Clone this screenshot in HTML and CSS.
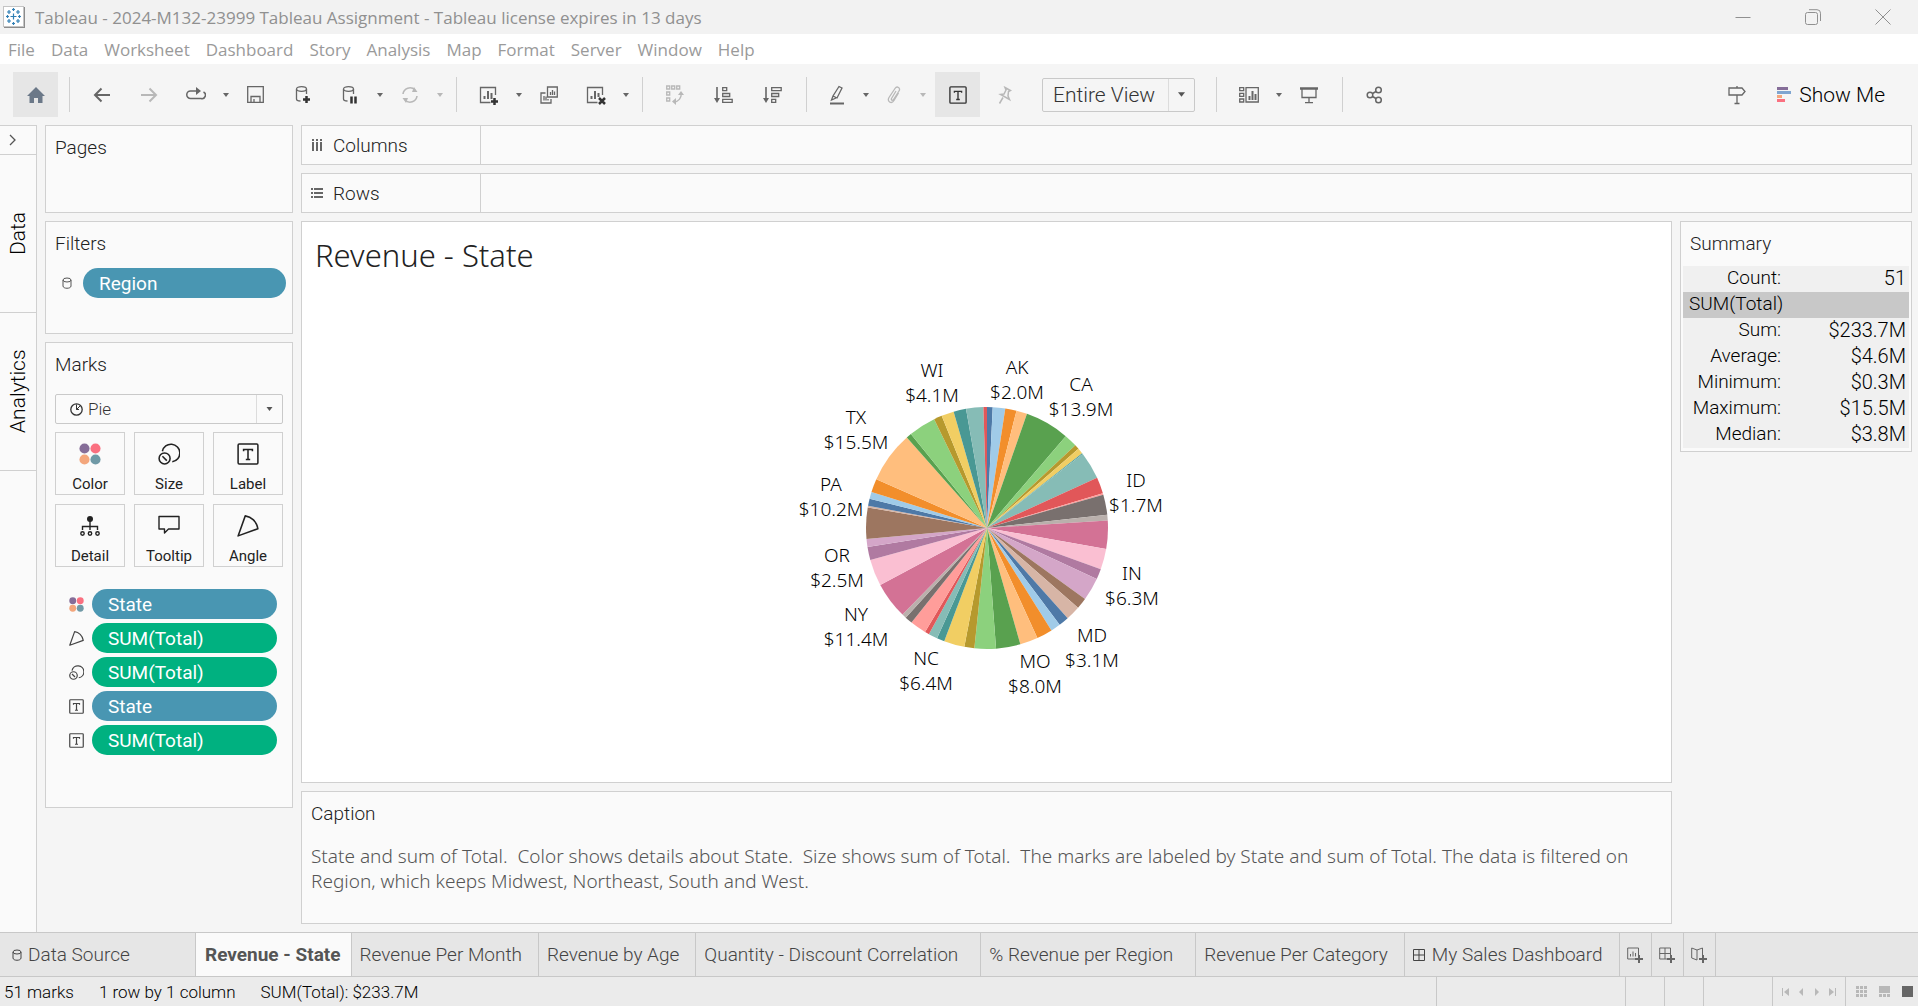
FILE: index.html
```html
<!DOCTYPE html>
<html lang="en">
<head>
<meta charset="utf-8">
<title>Tableau - 2024-M132-23999 Tableau Assignment</title>
<link rel="stylesheet" href="styles.css">
</head>
<body>
<svg class="sprite" aria-hidden="true">
  <symbol id="i-caret" viewBox="0 0 6 4"><path d="M0 0h6L3 4z" fill="currentColor" stroke="none"/></symbol>
  <symbol id="i-text" viewBox="0 0 20 20"><rect x="1" y="1" width="18" height="18" rx="1"/><path d="M6 7.500V6h8v1.500M10 6v9M8 15h4"/></symbol>
  <symbol id="i-angle" viewBox="0 0 20 20"><path d="M7.500.8 1 19 19 12.500C18 6 13 1.500 7.500.8z" stroke-linejoin="round"/></symbol>
  <symbol id="i-size" viewBox="0 0 20 20"><path d="M4 7.500a8 8 0 1 1 9 9.500"/><circle cx="6" cy="14" r="5"/><path d="M4 12l4 4"/></symbol>
  <symbol id="i-color" viewBox="0 0 20 20"><g stroke="none"><circle cx="5" cy="5" r="4.600" fill="#856d98"/><circle cx="15" cy="5" r="4.600" fill="#fa7080"/><circle cx="5" cy="15" r="4.600" fill="#f3a67c"/><circle cx="15" cy="15" r="4.600" fill="#7099a6"/></g></symbol>
  <symbol id="i-db" viewBox="0 0 10 12"><ellipse cx="5" cy="3" rx="4" ry="2"/><path d="M1 3v6c0 3 8 3 8 0V3"/></symbol>
  <symbol id="i-grid" viewBox="0 0 12 12"><path d="M.5.5h11v11H.5zM6 .5v11M.5 6h11"/></symbol>
</svg>

<header class="titlebar">
  <svg width="22" height="22" viewBox="0 0 22 22"><rect x=".5" y=".5" width="20" height="20" fill="#fff" stroke="#c4c4c4"/><path d="M1 21.500h21M21.500 1v21" stroke="#8c8c8c"/><g stroke="#2f7fb5" stroke-width="1.200"><path d="M10.500 7.500v6M7.500 10.500h6M10.500 2v3M9 3.500h3M10.500 16v3M9 17.500h3M4.500 9v3M3 10.500h3M16.500 9v3M15 10.500h3M6 4v4M4 6h4M15 4v4M13 6h4M6 13v4M4 15h4M15 13v4M13 15h4"/></g></svg>
  <h1 class="app-title">Tableau - 2024-M132-23999 Tableau Assignment - Tableau license expires in 13 days</h1>
  <div class="window-controls">
    <button aria-label="Minimize"><svg width="16" height="16" viewBox="0 0 16 16"><path d="M.5 8.500h15"/></svg></button>
    <button aria-label="Restore"><svg width="16" height="16" viewBox="0 0 16 16"><rect x=".5" y="3.500" width="12" height="12" rx="2"/><path d="M4 .7h8a3.500 3.500 0 0 1 3.500 3.500V12"/></svg></button>
    <button aria-label="Close"><svg width="16" height="16" viewBox="0 0 16 16"><path d="M.5.5l15 15M15.500.5l-15 15"/></svg></button>
  </div>
</header>

<nav class="menubar">
  <button>File</button><button>Data</button><button>Worksheet</button><button>Dashboard</button><button>Story</button><button>Analysis</button><button>Map</button><button>Format</button><button>Server</button><button>Window</button><button>Help</button>
</nav>

<div class="toolbar" role="toolbar">
  <button class="tool tool-on tool-home" aria-label="Start page"><svg class="solid" width="18" height="18" viewBox="0 0 18 18"><path d="M9 1 0 10h2.500v7h4.500v-5h4v5h4.500v-7H18z" fill="#6b7888"/></svg></button>
  <span class="sep"></span>
  <button class="tool" aria-label="Undo"><svg width="18" height="18" viewBox="0 0 18 18" stroke-width="2"><path d="M17 9H2M8.500 2.500 2 9l6.500 6.500"/></svg></button>
  <button class="tool off" aria-label="Redo"><svg width="18" height="18" viewBox="0 0 18 18" stroke-width="2"><path d="M1 9h15M9.500 2.500 16 9l-6.500 6.500"/></svg></button>
  <button class="tool" aria-label="Replay"><svg width="20" height="18" viewBox="0 0 20 18"><path d="M11 5H4.500a3.500 3.500 0 0 0 0 7.500H15a3.500 3.500 0 0 0 2.500-6.500" stroke-width="1.500"/><path d="M10 1v8l5-4z" fill="currentColor" stroke="none"/></svg></button>
  <button class="drop" aria-label="Replay options"><svg width="6" height="4"><use href="#i-caret"/></svg></button>
  <button class="tool" aria-label="Save"><svg width="17" height="17" viewBox="0 0 17 17" stroke-width="1.300"><path d="M.7.7h15.600v15.600H.7zM4 16v-5.500h9V16M7 16v-3"/></svg></button>
  <button class="tool" aria-label="New data source"><svg width="20" height="20" viewBox="0 0 20 20" stroke-width="1.300"><ellipse cx="8.500" cy="4" rx="5" ry="2.300"/><path d="M3.500 4v10c0 1 1.500 2 4 2M13.500 4v5"/><path d="M10 14.500h7M13.500 11v7" class="bold"/></svg></button>
  <button class="tool" aria-label="Pause updates"><svg width="20" height="20" viewBox="0 0 20 20" stroke-width="1.300"><ellipse cx="8.500" cy="4" rx="5" ry="2.300"/><path d="M3.500 4v10c0 1 1.500 2 4 2M13.500 4v5"/><path d="M11.500 11.500v7M15.500 11.500v7" class="bold"/></svg></button>
  <button class="drop" aria-label="Pause options"><svg width="6" height="4"><use href="#i-caret"/></svg></button>
  <button class="tool off" aria-label="Run update"><svg width="18" height="18" viewBox="0 0 18 18"><path d="M2 8A7 7 0 0 1 14 4M16 10A7 7 0 0 1 4 14" stroke-width="1.600"/><path d="M13 1l3.500 5H11zM5 17l-3.500-5H7z" fill="currentColor" stroke="none"/></svg></button>
  <button class="drop off" aria-label="Update options"><svg width="6" height="4"><use href="#i-caret"/></svg></button>
  <span class="sep"></span>
  <button class="tool" aria-label="New worksheet"><svg width="20" height="20" viewBox="0 0 20 20" stroke-width="1.300"><path d="M16.500 10V2.500h-15v15h10"/><path d="M5.500 14v-3M9 14V6M12.500 14V8" class="mid"/><path d="M12 16.500h7M15.500 13v7" class="bold"/></svg></button>
  <button class="drop" aria-label="New sheet options"><svg width="6" height="4"><use href="#i-caret"/></svg></button>
  <button class="tool" aria-label="Duplicate"><svg width="18" height="18" viewBox="0 0 18 18" stroke-width="1.300"><path d="M7.500 1h9.800v10H7.500zM5.500 7H1v10h10v-4M4 10v4.500M6 10.500v4M8 13v1.500M10.500 6v3M12.500 4v5M14.500 5.500V9"/></svg></button>
  <button class="tool" aria-label="Clear sheet"><svg width="20" height="20" viewBox="0 0 20 20" stroke-width="1.300"><path d="M16.500 10V2.500h-15v15h10"/><path d="M5.500 14v-3M9 14V6M12.500 12V8" class="mid"/><path d="M13 13l6 6M19 13l-6 6" class="bold"/></svg></button>
  <button class="drop" aria-label="Clear options"><svg width="6" height="4"><use href="#i-caret"/></svg></button>
  <span class="sep"></span>
  <div class="sorting">
    <button class="tool off" aria-label="Swap rows and columns"><svg width="18" height="20" viewBox="0 0 18 20" stroke-width="1.300"><path d="M.7 1h3v3h-3zM5.700 1h3v3h-3zM10.700 1h3v3h-3zM.7 7h3v3h-3zM.7 13h3v3h-3zM15 8c1 5-3 9-7 9"/><path d="M12 10l3-4 3 4zM10 13v7l-4-3.500z" fill="currentColor" stroke="none"/></svg></button>
    <button class="tool" aria-label="Sort ascending"><svg width="19" height="18" viewBox="0 0 19 18" stroke-width="1.300"><path d="M3 1v13" stroke-width="1.600"/><path d="M0 12h6l-3 5z" fill="currentColor" stroke="none"/><path d="M8.700 1.700h4v3h-4zM8.700 7.500h7v3h-7zM8.700 13.300h9.500v3H8.700z"/></svg></button>
    <button class="tool" aria-label="Sort descending"><svg width="19" height="18" viewBox="0 0 19 18" stroke-width="1.300"><path d="M3 1v13" stroke-width="1.600"/><path d="M0 12h6l-3 5z" fill="currentColor" stroke="none"/><path d="M8.700 1.700h9.500v3H8.700zM8.700 7.500h7v3h-7zM8.700 13.300h4v3h-4z"/></svg></button>
  </div>
  <span class="sep"></span>
  <div class="annotate">
    <button class="tool" aria-label="Highlight"><svg width="16" height="20" viewBox="0 0 16 20" stroke-width="1.300"><path d="M10 1.500l3 1.500-5 10-4-2zM4 11l-1.500 4L7 13"/><path d="M1 18.500h14" stroke-width="2"/></svg></button>
    <button class="drop" aria-label="Highlight options"><svg width="6" height="4"><use href="#i-caret"/></svg></button>
    <button class="tool off" aria-label="Group"><svg width="16" height="18" viewBox="0 0 16 18" stroke-width="1.300"><path d="M10 5l-4.500 7.500c-.8 1.500 1 2.500 2 1L13 5c2-3-2-5.500-4-2.500L3 11.500c-2.500 4 2.500 7 5 3L12.500 7"/></svg></button>
    <button class="drop off" aria-label="Group options"><svg width="6" height="4"><use href="#i-caret"/></svg></button>
  </div>
  <button class="tool tool-on" aria-label="Show mark labels"><svg width="18" height="18" stroke-width="1.500"><use href="#i-text"/></svg></button>
  <button class="tool off" aria-label="Fix axes"><svg width="16" height="18" viewBox="0 0 16 18" stroke-width="1.500"><path d="M9 1.500l5.500 3-2 1-.5 4.500 1.500 3.500-9-5L8 8l2-4zM7 11.500l-3.500 6"/></svg></button>
  <div class="combo combo-fit">
    <select aria-label="Fit"><option>Entire View</option></select>
    <span class="combo-arrow"><svg width="7" height="5"><use href="#i-caret"/></svg></span>
  </div>
  <span class="sep"></span>
  <button class="tool" aria-label="Show or hide cards"><svg width="20" height="16" viewBox="0 0 20 16" stroke-width="1.300"><path d="M.7.700h4v3h-4zM.7 6.300h4v3h-4zM.7 12h4v3h-4zM7 .7h12.300v14.300H7z"/><path d="M10.500 13V9M13.500 13V4M16.500 13V7" class="mid"/></svg></button>
  <button class="drop" aria-label="Card options"><svg width="6" height="4"><use href="#i-caret"/></svg></button>
  <button class="tool" aria-label="Presentation mode"><svg width="18" height="18" viewBox="0 0 18 18" stroke-width="1.300"><path d="M0 2.500h18" stroke-width="2.500"/><path d="M2 3v8.500h14V3M9 12v4.500M5 16.700h8"/></svg></button>
  <span class="sep"></span>
  <button class="tool" aria-label="Share"><svg width="17" height="18" viewBox="0 0 17 18" stroke-width="1.500"><circle cx="4" cy="9" r="2.800"/><circle cx="12.500" cy="4" r="2.800"/><circle cx="12.500" cy="14" r="2.800"/><path d="M6.500 7.500 10 5.500M6.500 10.500l3.500 2"/></svg></button>
  <button class="tool tool-guide" aria-label="Data guide"><svg width="18" height="20" viewBox="0 0 18 20" stroke-width="1.300"><path d="M1 3h13l3 3.500L14 10H1zM9 1v2M9 10v8M6.500 18.500h5"/></svg></button>
  <button class="show-me"><svg class="solid" width="14" height="16" viewBox="0 0 14 16"><path d="M0 0h11v3H0z" fill="#856d98"/><path d="M0 4h14v3H0z" fill="#7fa5d0"/><path d="M0 8h5v3H0z" fill="#f3a67c"/><path d="M0 12h8v3H0z" fill="#fa7080"/></svg>Show Me</button>
</div>

<div class="workspace">
  <aside class="rail">
    <button class="rail-toggle" aria-label="Expand pane"><svg width="7" height="12" viewBox="0 0 7 12" stroke-width="1.300"><path d="M1 1l5 5-5 5"/></svg></button>
    <button class="rail-tab">Data</button>
    <button class="rail-tab">Analytics</button>
  </aside>

  <section class="cards">
    <div class="card card-pages"><h2>Pages</h2></div>
    <div class="card card-filters">
      <h2>Filters</h2>
      <div class="filter-row"><svg width="10" height="12"><use href="#i-db"/></svg><button class="pill dim">Region</button></div>
    </div>
    <div class="card card-marks">
      <h2>Marks</h2>
      <div class="combo combo-mark">
        <svg width="13" height="13" viewBox="0 0 13 13"><circle cx="6.500" cy="6.500" r="5.700" stroke-width="1.300"/><path d="M6.500 1.500v5l3.500-3.500M6.500 6.500H9"/></svg>
        <select aria-label="Mark type"><option>Pie</option></select>
        <span class="combo-arrow"><svg width="7" height="4"><use href="#i-caret"/></svg></span>
      </div>
      <div class="mark-buttons">
        <button><svg width="22" height="22"><use href="#i-color"/></svg>Color</button>
        <button><svg width="22" height="22"><use href="#i-size"/></svg>Size</button>
        <button><svg width="22" height="22"><use href="#i-text"/></svg>Label</button>
        <button><svg width="22" height="22" viewBox="0 0 22 22"><circle cx="11" cy="4" r="3" fill="currentColor" stroke="none"/><path d="M11 6v9M3.500 15v-3.500h15V15"/><circle cx="3.500" cy="18.500" r="1.700"/><circle cx="11" cy="18.500" r="1.700"/><circle cx="18.500" cy="18.500" r="1.700"/></svg>Detail</button>
        <button><svg width="22" height="22" viewBox="0 0 22 22"><path d="M1 1.500h20v12.500H10.500L6.500 18v-4H1z" stroke-linejoin="round"/></svg>Tooltip</button>
        <button><svg width="22" height="22"><use href="#i-angle"/></svg>Angle</button>
      </div>
      <ul class="mark-pills">
        <li><svg width="15" height="15"><use href="#i-color"/></svg><button class="pill dim">State</button></li>
        <li><svg width="15" height="15"><use href="#i-angle"/></svg><button class="pill measure">SUM(Total)</button></li>
        <li><svg width="15" height="15"><use href="#i-size"/></svg><button class="pill measure">SUM(Total)</button></li>
        <li><svg width="15" height="15"><use href="#i-text"/></svg><button class="pill dim">State</button></li>
        <li><svg width="15" height="15"><use href="#i-text"/></svg><button class="pill measure">SUM(Total)</button></li>
      </ul>
    </div>
  </section>

  <main class="sheet">
    <div class="shelf"><h2><svg class="solid" width="12" height="12" viewBox="0 0 12 12"><path d="M1 0h2v2H1zM5 0h2v2H5zM9 0h2v2H9zM1 3h2v9H1zM5 3h2v9H5zM9 3h2v9H9z"/></svg>Columns</h2></div>
    <div class="shelf"><h2><svg class="solid" width="12" height="12" viewBox="0 0 12 12"><path d="M0 1h2v2H0zM0 5h2v2H0zM0 9h2v2H0zM3 1h9v2H3zM3 5h9v2H3zM3 9h9v2H3z"/></svg>Rows</h2></div>
    <div class="stage">
      <div class="stage-main">
        <article class="view">
          <h2 class="view-title">Revenue - State</h2>
          <svg class="pie" id="pie" width="400" height="400" viewBox="-200 -200 400 400" role="img" aria-label="Revenue by state"></svg>
        </article>
        <div class="card card-caption">
          <h2>Caption</h2>
          <p>State and sum of Total.&nbsp; Color shows details about State.&nbsp; Size shows sum of Total.&nbsp; The marks are labeled by State and sum of Total. The data is filtered on Region, which keeps Midwest, Northeast, South and West.</p>
        </div>
      </div>
      <div class="card card-summary">
        <h2>Summary</h2>
        <table>
          <tr><th scope="row">Count:</th><td>51</td></tr>
          <tr class="group"><th colspan="2" scope="rowgroup">SUM(Total)</th></tr>
          <tr><th scope="row">Sum:</th><td>$233.7M</td></tr>
          <tr><th scope="row">Average:</th><td>$4.6M</td></tr>
          <tr><th scope="row">Minimum:</th><td>$0.3M</td></tr>
          <tr><th scope="row">Maximum:</th><td>$15.5M</td></tr>
          <tr><th scope="row">Median:</th><td>$3.8M</td></tr>
        </table>
      </div>
    </div>
  </main>
</div>

<nav class="sheet-tabs">
  <button class="tab tab-source"><svg width="10" height="12"><use href="#i-db"/></svg>Data Source</button>
  <button class="tab tab-active">Revenue - State</button>
  <button class="tab">Revenue Per Month</button>
  <button class="tab">Revenue by Age</button>
  <button class="tab tab-wide">Quantity - Discount Correlation</button>
  <button class="tab tab-wide">% Revenue per Region</button>
  <button class="tab">Revenue Per Category</button>
  <button class="tab"><svg width="12" height="12"><use href="#i-grid"/></svg>My Sales Dashboard</button>
  <button class="tab-new" aria-label="New worksheet"><svg width="16" height="16" viewBox="0 0 16 16"><path d="M11.500 8V1H.7v11H8M3.500 9.500V7M6 9.500V4.500M8.500 9.500V6"/><path d="M8 12h8M12 8v8" class="plus"/></svg></button>
  <button class="tab-new" aria-label="New dashboard"><svg width="16" height="16" viewBox="0 0 16 16"><path d="M11.500 8V1H.7v11H8M6 1v11M.7 6.500h10.800"/><path d="M8 12h8M12 8v8" class="plus"/></svg></button>
  <button class="tab-new" aria-label="New story"><svg width="16" height="16" viewBox="0 0 16 16"><path d="M11.500 8V1L6 3 .7 1v10L6 13M6 3v10"/><path d="M8 12h8M12 8v8" class="plus"/></svg></button>
</nav>

<footer class="statusbar">
  <span>51 marks</span><span>1 row by 1 column</span><span>SUM(Total): $233.7M</span>
  <div class="status-right">
    <i class="cell cell-wide"></i><i class="cell"></i><i class="cell"></i><i class="cell cell-mid"></i>
    <div class="cell pager">
      <button aria-label="First"><svg class="solid" width="7" height="8" viewBox="0 0 7 8"><path d="M0 0h1v8H0zM7 0v8L2 4z"/></svg></button>
      <button aria-label="Previous"><svg class="solid" width="7" height="8" viewBox="0 0 7 8"><path d="M5 0v8L1 4z"/></svg></button>
      <button aria-label="Next"><svg class="solid" width="7" height="8" viewBox="0 0 7 8"><path d="M2 0v8l4-4z"/></svg></button>
      <button aria-label="Last"><svg class="solid" width="7" height="8" viewBox="0 0 7 8"><path d="M6 0h1v8H6zM0 0v8l5-4z"/></svg></button>
    </div>
    <div class="cell layouts">
      <button aria-label="Sheet sorter"><svg class="solid" width="11" height="11" viewBox="0 0 11 11"><path d="M0 0h3v3H0zM4 0h3v3H4zM8 0h3v3H8zM0 4h3v3H0zM4 4h3v3H4zM8 4h3v3H8zM0 8h3v3H0zM4 8h3v3H4zM8 8h3v3H8z"/></svg></button>
      <button aria-label="Filmstrip"><svg class="solid" width="11" height="11" viewBox="0 0 11 11"><path d="M0 0h11v7H0zM0 8h3v3H0zM4 8h3v3H4zM8 8h3v3H8z"/></svg></button>
      <button class="current" aria-label="Tabs"><svg class="solid" width="11" height="11" viewBox="0 0 11 11"><path d="M0 0h11v11H0z"/></svg></button>
    </div>
  </div>
</footer>
<script src="pie.js"></script>
</body>
</html>
```
FILE: pie.js
```js
const palette = ['#4e79a7', '#a0cbe8', '#f28e2b', '#ffbe7d', '#59a14f', '#8cd17d', '#b6992d', '#f1ce63', '#499894', '#86bcb6',
  '#e15759', '#ff9d9a', '#79706e', '#bab0ac', '#d37295', '#fabfd2', '#b07aa1', '#d4a6c8', '#9d7660', '#d7b5a6'];

// Cumulative end angle of each state's slice, in degrees clockwise from the top.
const ends = [2.7, 8.7, 14.1, 19.3, 40.6, 46.9, 49.1, 51.8, 52.3, 65.5, 73.3, 74, 83.7, 86.5, 100, 109.9, 114.9, 125.9, 131.2, 138.2,
  143.1, 147.8, 155.4, 164, 175.7, 186, 190.8, 200.7, 204.4, 208.7, 210.8, 218.6, 222.2, 224.3, 241.9, 254.7, 261, 264.8, 279.8, 280.6,
  284, 287.3, 293.8, 318.5, 321, 334.1, 338, 344, 350, 358.3, 360];

const labels = [
  ['AK', '$2.0M', 30, -154], ['CA', '$13.9M', 94, -137], ['ID', '$1.7M', 149, -41], ['IN', '$6.3M', 145, 52],
  ['MD', '$3.1M', 105, 114], ['MO', '$8.0M', 48, 140], ['NC', '$6.4M', -61, 137], ['NY', '$11.4M', -131, 93],
  ['OR', '$2.5M', -150, 34], ['PA', '$10.2M', -156, -37], ['TX', '$15.5M', -131, -104], ['WI', '$4.1M', -55, -151]
];

const svg = document.getElementById('pie');
const radius = 121;

function add(name, attrs, text) {
  const el = document.createElementNS('http://www.w3.org/2000/svg', name);
  for (const key in attrs) el.setAttribute(key, attrs[key]);
  if (text) el.textContent = text;
  svg.appendChild(el);
}

function point(deg) {
  const a = deg * Math.PI / 180;
  return (radius * Math.sin(a)).toFixed(2) + ' ' + (-radius * Math.cos(a)).toFixed(2);
}

let start = 0;
ends.forEach((end, i) => {
  add('path', { d: `M0 0L${point(start)}A${radius} ${radius} 0 0 1 ${point(end)}Z`, fill: palette[i % 20] });
  start = end;
});

labels.forEach(([state, total, x, y]) => {
  add('text', { x: x, y: y }, state);
  add('text', { x: x, y: y + 25 }, total);
});
```
FILE: styles.css
```css
* { box-sizing: border-box; }

body {
  margin: 0;
  min-height: 100vh;
  display: flex;
  flex-direction: column;
  background: #f5f5f5;
  color: #222;
  font-family: Roboto, "Liberation Sans", sans-serif;
  font-size: 19px;
  font-weight: 300;
}

button, select {
  margin: 0;
  padding: 0;
  border: 0;
  background: none;
  color: inherit;
  font: inherit;
}

h1, h2, p, ul { margin: 0; padding: 0; font-size: inherit; font-weight: inherit; }

svg { flex: none; fill: none; stroke: currentColor; }
.solid { fill: currentColor; stroke: none; }
.sprite { display: none; }

/* Window frame */
.titlebar {
  display: flex;
  align-items: center;
  height: 34px;
  padding-left: 3px;
  background: #f2f2f2;
  color: #909090;
}
.app-title {
  flex: 1;
  margin-left: 10px;
  font-family: "Open Sans", "Noto Sans", sans-serif;
  font-size: 17px;
  font-weight: 400;
}
.window-controls { display: flex; }
.window-controls button { width: 70px; height: 34px; display: grid; place-items: center; }

.menubar {
  display: flex;
  gap: 16px;
  height: 30px;
  padding: 0 8px;
  background: #fff;
  color: #9a9a9a;
  font-family: "Open Sans", "Noto Sans", sans-serif;
  font-size: 17px;
  font-weight: 400;
}

/* Toolbar */
.toolbar {
  display: flex;
  align-items: center;
  height: 61px;
  padding: 0 33px 0 13px;
  color: #666;
}
.tool { width: 47px; height: 45px; display: grid; place-items: center; }
.tool .bold { stroke: #333; stroke-width: 2.5; }
.tool .mid { stroke-width: 2; }
.tool-on { width: 45px; background: #e6e6e6; color: #333; }
.tool-home { margin-right: 1px; }
.tool-guide { margin-left: auto; }
.drop { width: 13px; height: 45px; display: grid; place-items: center; }
.off { color: #b8b8b8; }
.sorting { display: flex; gap: 2px; }
.annotate { display: flex; width: 120px; }
.annotate .tool { width: 44px; }
.sep { width: 1px; height: 35px; margin: 0 8px 0 10px; background: #d0d0d0; }
.show-me {
  display: flex;
  align-items: center;
  gap: 8px;
  margin-left: 17px;
  color: #000;
  font-size: 21px;
}

.combo {
  display: flex;
  align-items: center;
  border: 1px solid #c9c9c9;
  border-radius: 2px;
  color: #333;
}
.combo select { flex: 1; appearance: none; }
.combo-arrow {
  align-self: stretch;
  width: 26px;
  display: grid;
  place-items: center;
  border-left: 1px solid #dcdcdc;
  color: #555;
}
.combo-fit { width: 153px; height: 34px; margin: 0 11px 0 15px; padding-left: 10px; font-size: 21px; }
.combo-mark { height: 30px; margin-top: 17px; padding-left: 14px; font-size: 17px; }
.combo-mark select { margin-left: 5px; }

/* Side rail */
.workspace { flex: 1; display: flex; }
.rail {
  width: 37px;
  display: flex;
  flex-direction: column;
  border: solid #d0d0d0;
  border-width: 1px 1px 0 0;
  background: #fafafa;
  color: #000;
}
.rail button { border-bottom: 1px solid #d0d0d0; }
.rail-toggle { height: 29px; padding-left: 9px; text-align: left; color: #555; }
.rail-toggle svg { display: block; }
.rail-tab { height: 158px; writing-mode: vertical-rl; font-size: 21px; transform: rotate(180deg); }
.rail .rail-tab { border: solid #d0d0d0; border-width: 1px 0 0; }

/* Cards */
.cards { width: 248px; margin-left: 8px; display: flex; flex-direction: column; gap: 8px; }
.card { padding: 10px 9px; border: 1px solid #d0d0d0; background: #fafafa; }
.card h2 { line-height: 24px; }
.card-pages { height: 88px; }
.card-filters { height: 113px; padding-right: 6px; }
.card-marks { height: 466px; }

.pill {
  flex: 1;
  height: 30px;
  padding: 0 16px;
  border-radius: 15px;
  color: #fff;
  font-weight: 400;
  text-align: left;
}
.dim { background: #4996b2; }
.measure { background: #00b180; }

.filter-row { display: flex; align-items: center; gap: 11px; margin-top: 12px; padding-left: 7px; color: #555; }

.mark-buttons { display: grid; grid-template-columns: repeat(3, 1fr); gap: 9px; margin-top: 8px; }
.mark-buttons button {
  height: 63px;
  display: flex;
  flex-direction: column;
  align-items: center;
  gap: 9px;
  padding-top: 10px;
  border: 1px solid #d0d0d0;
  font-size: 15px;
  font-weight: 400;
  line-height: 20px;
}
.mark-buttons svg { stroke-width: 1.4; }
.mark-pills { display: grid; gap: 4px; margin-top: 22px; padding: 0 6px 0 14px; list-style: none; color: #444; }
.mark-pills li { display: flex; align-items: center; gap: 8px; }
.mark-pills svg { stroke-width: 1.6; }

/* Sheet */
.sheet { flex: 1; min-width: 0; display: flex; flex-direction: column; gap: 8px; padding: 0 6px 8px 8px; }
.shelf { height: 40px; border: 1px solid #d0d0d0; background: #fafafa; }
.shelf h2 {
  width: 179px;
  height: 38px;
  display: flex;
  align-items: center;
  gap: 10px;
  padding-left: 9px;
  border-right: 1px solid #d0d0d0;
}
.shelf svg { color: #666; }
.stage { flex: 1; display: flex; align-items: flex-start; gap: 8px; }
.stage-main { flex: 1; align-self: stretch; display: flex; flex-direction: column; gap: 8px; }
.view {
  flex: 1;
  display: flex;
  flex-direction: column;
  padding-top: 16px;
  border: 1px solid #d0d0d0;
  background: #fff;
}
.view-title {
  padding-left: 13px;
  font-family: "Noto Sans", "Open Sans", sans-serif;
  font-size: 31px;
  line-height: 35px;
}
.pie { margin: auto; }
.pie path { stroke: none; }
.pie text {
  fill: #000;
  stroke: none;
  font-family: "Noto Sans", "Open Sans", sans-serif;
  font-size: 19px;
  text-anchor: middle;
}
.card-caption { min-height: 133px; }
.card-caption p {
  margin-top: 18px;
  color: #555;
  font-family: "Noto Sans", "Open Sans", sans-serif;
  font-size: 19px;
  line-height: 25px;
}

.card-summary { width: 232px; padding: 10px 2px 3px; }
.card-summary h2 { padding-left: 7px; }
.card-summary table { width: 100%; margin-top: 10px; border-collapse: collapse; background: #f0f0f0; color: #000; }
.card-summary tr { height: 26px; }
.card-summary th, .card-summary td { padding: 0; font-weight: 300; line-height: 24px; text-align: right; vertical-align: top; }
.card-summary th { width: 98px; }
.card-summary td { padding-right: 3px; font-size: 20px; }
.card-summary .group { background: #c8c8c8; }
.card-summary .group th { padding-left: 6px; text-align: left; }

/* Sheet tabs */
.sheet-tabs { display: flex; height: 45px; border: solid #c8c8c8; border-width: 1px 0; background: #e6e6e6; color: #444; }
.tab { display: flex; align-items: center; gap: 7px; padding: 0 16px 0 8px; border-right: 1px solid #c8c8c8; white-space: nowrap; }
.tab-source { width: 196px; padding-left: 12px; gap: 6px; }
.tab-active { padding: 0 10px 0 9px; background: #fafafa; color: #555; font-weight: 700; }
.tab-wide { padding-right: 22px; }
.tab-new { width: 32px; display: grid; place-items: center; border-right: 1px solid #c8c8c8; color: #666; }
.tab-new .plus { stroke-width: 2; }

/* Status bar */
.statusbar { display: flex; align-items: center; gap: 25px; height: 29px; padding-left: 4px; background: #ebebeb; color: #000; font-size: 17px; }
.status-right { align-self: stretch; display: flex; margin-left: auto; }
.cell { width: 39px; display: flex; align-items: center; border-left: 1px solid #c8c8c8; }
.cell-wide { width: 189px; }
.cell-mid { width: 69px; }
.pager { width: 73px; justify-content: space-evenly; color: #b8b8b8; }
.layouts { width: 73px; gap: 12px; padding-left: 10px; color: #b8b8b8; }
.statusbar button { display: grid; }
.layouts .current { color: #666; }
```
